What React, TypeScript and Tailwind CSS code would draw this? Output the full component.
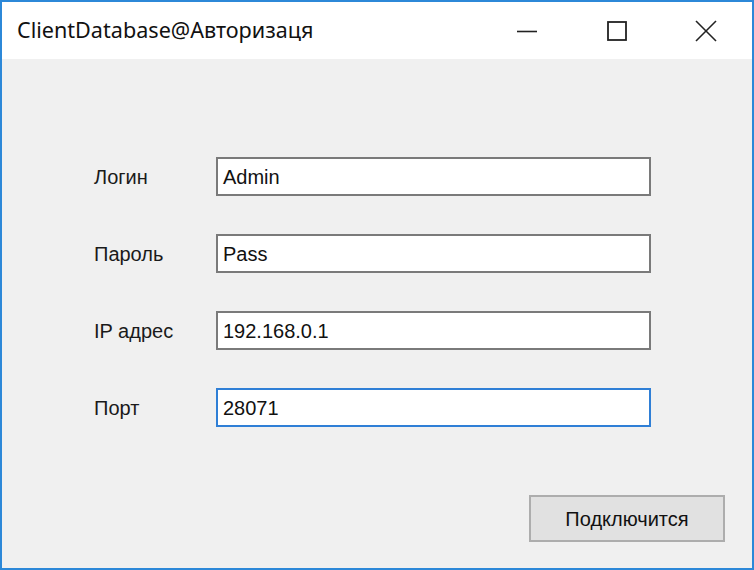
import React from "react";

const titleFont = { fontFamily: '"Noto Sans", "Open Sans", Arial, sans-serif' };
const formFont = '"Liberation Sans", Arial, sans-serif';

function Field({ label, value, focused }: { label: string; value: string; focused?: boolean }) {
  return (
    <div className="flex items-center h-[39px]" style={{ fontFamily: formFont }}>
      <div className="w-[122px] pl-[92px] box-content text-[20px] text-[#1a1a1a] whitespace-nowrap">{label}</div>
      <div
        className={
          "w-[435px] h-[39px] bg-white flex items-center pl-[5px] text-[20px] text-[#111] " +
          (focused ? "border-2 border-[#2f7fd6]" : "border-2 border-[#7a7a7a]")
        }
      >
        {value}
      </div>
    </div>
  );
}

export default function App() {
  return (
    <div className="w-[754px] h-[570px] overflow-hidden">
      <div className="w-[754px] h-[570px] border-2 border-[#2c88d8] flex flex-col bg-[#f0f0f0]">
        <div className="h-[57px] bg-white flex items-center shrink-0">
          <div className="pl-[15px] text-[21.6px] text-[#111] flex-1 whitespace-nowrap" style={titleFont}>
            ClientDatabase@Авторизаця
          </div>
          <div className="flex items-center h-full">
            <div className="w-[90px] h-full flex items-center justify-center">
              <svg width="20" height="20" viewBox="0 0 20 20">
                <line x1="0" y1="10.5" x2="20" y2="10.5" stroke="#222" strokeWidth="1.6" />
              </svg>
            </div>
            <div className="w-[90px] h-full flex items-center justify-center">
              <svg width="20" height="20" viewBox="0 0 20 20">
                <rect x="1" y="1" width="18" height="18" fill="none" stroke="#222" strokeWidth="1.8" />
              </svg>
            </div>
            <div className="w-[90px] h-full flex items-center justify-center pr-[2px]">
              <svg width="22" height="22" viewBox="0 0 22 22">
                <line x1="1" y1="1" x2="21" y2="21" stroke="#222" strokeWidth="1.6" />
                <line x1="21" y1="1" x2="1" y2="21" stroke="#222" strokeWidth="1.6" />
              </svg>
            </div>
          </div>
        </div>
        <div className="flex-1 flex flex-col pt-[98px]">
          <div className="flex flex-col gap-[38px]">
            <Field label="Логин" value="Admin" />
            <Field label="Пароль" value="Pass" />
            <Field label="IP адрес" value="192.168.0.1" />
            <Field label="Порт" value="28071" focused />
          </div>
          <div className="flex justify-end pr-[27px] mt-[68px]">
            <div
              className="w-[196px] h-[47px] bg-[#e1e1e1] border-2 border-[#adadad] flex items-center justify-center text-[20px] text-[#111]"
              style={{ fontFamily: formFont }}
            >
              Подключится
            </div>
          </div>
        </div>
      </div>
    </div>
  );
}
